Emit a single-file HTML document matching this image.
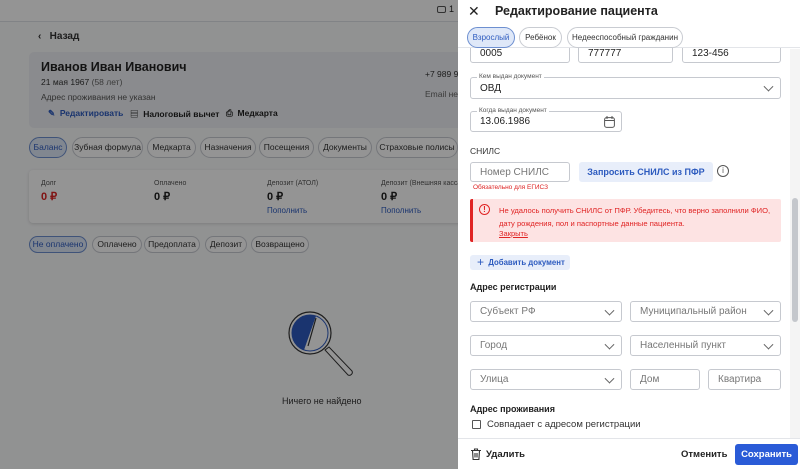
<!DOCTYPE html>
<html><head><meta charset="utf-8"><style>
*{box-sizing:border-box;margin:0;padding:0}
body{width:800px;height:469px;overflow:hidden;position:relative;font-family:"Liberation Sans","Noto Sans CJK SC",sans-serif;background:#fafbfc;color:#222;font-size:10px}
.abs{position:absolute;white-space:nowrap}
.pill{position:absolute;border:1px solid #c9ccd2;border-radius:12px;background:#fff;font-size:8.5px;color:#333;text-align:center;white-space:nowrap}
.ov{position:absolute;left:0;top:0;width:800px;height:469px;background:rgba(0,0,0,0.42)}
.panel{position:absolute;left:458px;top:0;width:342px;height:469px;background:#fff}
.inp{position:absolute;border:1px solid #c6c9cf;border-radius:3px;background:#fff;font-size:10px;color:#222;padding-left:9px;display:flex;align-items:center;white-space:nowrap}
.ph{color:#777}
.chev{position:absolute;right:8px;top:50%;width:7px;height:7px;border-right:1.3px solid #666;border-bottom:1.3px solid #666;transform:translateY(-70%) rotate(45deg)}
.lbl{position:absolute;top:-5px;left:6px;background:#fff;padding:0 2px;font-size:6.5px;color:#555}
</style></head><body>
<div class="abs" style="left:0;top:0;width:800px;height:22px;background:#fff;border-bottom:1px solid #dfe2e7"></div>
<div class="abs" style="left:437px;top:6px;width:9px;height:7px;border:1.2px solid #555;border-radius:2px"></div>
<div class="abs" style="left:449px;top:4px;font-size:9px">1</div>
<div class="abs" style="left:38px;top:31px;font-size:10px;font-weight:bold;color:#333">‹&nbsp;&nbsp;&nbsp;Назад</div>
<div class="abs" style="left:29px;top:52px;width:440px;height:76px;background:#eef0f4;border-radius:5px"></div>
<div class="abs" style="left:41px;top:60px;font-size:12.5px;font-weight:bold">Иванов Иван Иванович</div>
<div class="abs" style="left:41px;top:77px;font-size:8.5px;color:#333">21 мая 1967 <span style="color:#666">(58 лет)</span></div>
<div class="abs" style="left:41px;top:92px;font-size:8.5px;color:#555">Адрес проживания не указан</div>
<div class="abs" style="left:425px;top:69px;font-size:8.5px;color:#333">+7 989 9</div>
<div class="abs" style="left:425px;top:89px;font-size:8.5px;color:#666">Email не</div>
<div class="abs" style="left:48px;top:108px;font-size:8.5px;font-weight:bold;color:#2d5bbf">✎&nbsp; Редактировать</div>
<div class="abs" style="left:130px;top:108px;font-size:8.5px;font-weight:bold;color:#222">▤&nbsp; Налоговый вычет</div>
<div class="abs" style="left:226px;top:108px;font-size:8.5px;font-weight:bold;color:#222">⎙&nbsp; Медкарта</div>
<div class="pill" style="left:29px;top:137px;width:38px;height:21px;line-height:19px;background:#dfe8f8;border-color:#6d8fd0;color:#2d5bbf">Баланс</div>
<div class="pill" style="left:72px;top:137px;width:71px;height:21px;line-height:19px">Зубная формула</div>
<div class="pill" style="left:147px;top:137px;width:49px;height:21px;line-height:19px">Медкарта</div>
<div class="pill" style="left:200px;top:137px;width:56px;height:21px;line-height:19px">Назначения</div>
<div class="pill" style="left:259px;top:137px;width:55px;height:21px;line-height:19px">Посещения</div>
<div class="pill" style="left:318px;top:137px;width:54px;height:21px;line-height:19px">Документы</div>
<div class="pill" style="left:376px;top:137px;width:82px;height:21px;line-height:19px">Страховые полисы</div>
<div class="abs" style="left:29px;top:170px;width:440px;height:53px;background:#fff;border-radius:4px;box-shadow:0 1px 3px rgba(0,0,0,.15)"></div>
<div class="abs" style="left:41px;top:180px;font-size:7px;color:#555">Долг</div>
<div class="abs" style="left:41px;top:190px;font-size:11px;font-weight:bold;color:#d22">0 ₽</div>
<div class="abs" style="left:154px;top:180px;font-size:7px;color:#555">Оплачено</div>
<div class="abs" style="left:154px;top:190px;font-size:11px;font-weight:bold">0 ₽</div>
<div class="abs" style="left:267px;top:180px;font-size:7px;color:#555">Депозит (АТОЛ)</div>
<div class="abs" style="left:267px;top:190px;font-size:11px;font-weight:bold">0 ₽</div>
<div class="abs" style="left:267px;top:206px;font-size:8px;color:#2d5bbf">Пополнить</div>
<div class="abs" style="left:381px;top:180px;font-size:7px;color:#555">Депозит (Внешняя касса)</div>
<div class="abs" style="left:381px;top:190px;font-size:11px;font-weight:bold">0 ₽</div>
<div class="abs" style="left:381px;top:206px;font-size:8px;color:#2d5bbf">Пополнить</div>
<div class="pill" style="left:29px;top:236px;width:58px;height:17px;line-height:15px;background:#dfe8f8;border-color:#6d8fd0;color:#2d5bbf">Не оплачено</div>
<div class="pill" style="left:92px;top:236px;width:50px;height:17px;line-height:15px">Оплачено</div>
<div class="pill" style="left:144px;top:236px;width:56px;height:17px;line-height:15px">Предоплата</div>
<div class="pill" style="left:205px;top:236px;width:42px;height:17px;line-height:15px">Депозит</div>
<div class="pill" style="left:251px;top:236px;width:58px;height:17px;line-height:15px">Возвращено</div>
<svg class="abs" style="left:285px;top:308px" width="70" height="70" viewBox="0 0 70 70">
<circle cx="25" cy="25" r="21" fill="#fff" stroke="#333" stroke-width="1.2"/>
<path d="M25 7 A18 18 0 0 0 19 42 L31 8 Z" fill="#2d5bbf"/>
<circle cx="25" cy="25" r="18" fill="none" stroke="#2d5bbf" stroke-width="1"/>
<path d="M31 10 L23 38" stroke="#333" stroke-width="1.2"/>
<path d="M40 42 l4 -3 l23 24 a3 3 0 0 1 -4 4 z" fill="#fff" stroke="#333" stroke-width="1"/>
</svg>
<div class="abs" style="left:282px;top:396px;font-size:9px;color:#333">Ничего не найдено</div>
<div class="ov"></div>
<div class="panel">
 <div class="inp abs" style="left:12px;top:28px;width:100px;height:35px;align-items:flex-end;padding-bottom:3px">0005</div>
 <div class="inp abs" style="left:120px;top:28px;width:95px;height:35px;align-items:flex-end;padding-bottom:3px">777777</div>
 <div class="inp abs" style="left:224px;top:28px;width:99px;height:35px;align-items:flex-end;padding-bottom:3px">123-456</div>
 <div class="abs" style="left:0;top:0;width:342px;height:48px;background:#fff;border-bottom:1px solid #e3e5e9"></div>
 <div class="abs" style="left:10px;top:3px;font-size:14px;color:#222">✕</div>
 <div class="abs" style="left:37px;top:4px;font-size:12.5px;font-weight:bold">Редактирование пациента</div>
 <div class="pill" style="left:9px;top:27px;width:48px;height:21px;line-height:19px;background:#dfe8f8;border-color:#6d8fd0;color:#2d5bbf;font-size:8px">Взрослый</div>
 <div class="pill" style="left:61px;top:27px;width:43px;height:21px;line-height:19px;font-size:8px">Ребёнок</div>
 <div class="pill" style="left:109px;top:27px;width:116px;height:21px;line-height:19px;font-size:8px">Недееспособный гражданин</div>
 <div class="inp" style="left:12px;top:77px;width:311px;height:22px"><span class="lbl">Кем выдан документ</span>ОВД<span class="chev"></span></div>
 <div class="inp" style="left:12px;top:111px;width:152px;height:21px"><span class="lbl">Когда выдан документ</span>13.06.1986
  <svg class="abs" style="right:6px;top:4px" width="11" height="12" viewBox="0 0 11 12"><rect x="0.6" y="1.6" width="9.8" height="9.8" rx="2" fill="none" stroke="#555"/><path d="M0.6 4.5H10.4M3 0v3M8 0v3" stroke="#555"/></svg></div>
 <div class="abs" style="left:12px;top:146px;font-size:8.5px;color:#333">СНИЛС</div>
 <div class="inp" style="left:12px;top:162px;width:100px;height:20px"><span class="ph">Номер СНИЛС</span></div>
 <div class="abs" style="left:121px;top:162px;width:134px;height:20px;background:#e8eefa;border-radius:3px;color:#2d5bbf;font-weight:bold;font-size:9px;text-align:center;line-height:20px">Запросить СНИЛС из ПФР</div>
 <div class="abs" style="left:259px;top:165px;width:12px;height:12px;border:1px solid #555;border-radius:50%;font-size:8px;text-align:center;line-height:10px;color:#555">i</div>
 <div class="abs" style="left:15px;top:184px;font-size:6.5px;color:#d22">Обязательно для ЕГИСЗ</div>
 <div class="abs" style="left:12px;top:199px;width:311px;height:43px;background:#fde3e3;border-left:3px solid #e02424;border-radius:2px"></div>
 <div class="abs" style="left:21px;top:204px;width:11px;height:11px;border:1.2px solid #e02424;border-radius:50%;color:#e02424;font-size:8px;font-weight:bold;text-align:center;line-height:9px">!</div>
 <div class="abs" style="left:41px;top:204px;font-size:7.6px;color:#e02424;line-height:13px">Не удалось получить СНИЛС от ПФР. Убедитесь, что верно заполнили ФИО,<br>дату рождения, пол и паспортные данные пациента.</div>
 <div class="abs" style="left:41px;top:229px;font-size:7.5px;color:#e02424;text-decoration:underline">Закрыть</div>
 <div class="abs" style="left:12px;top:255px;width:100px;height:15px;background:#e8eefa;border-radius:3px;color:#2d5bbf;font-weight:bold;font-size:7.8px;line-height:15px;padding-left:7px"><span style="font-size:12px;font-weight:normal;vertical-align:-1px">+</span>&nbsp; Добавить документ</div>
 <div class="abs" style="left:12px;top:282px;font-size:9px;font-weight:bold">Адрес регистрации</div>
 <div class="inp" style="left:12px;top:301px;width:152px;height:21px"><span class="ph">Субъект РФ</span><span class="chev"></span></div>
 <div class="inp" style="left:172px;top:301px;width:151px;height:21px"><span class="ph">Муниципальный район</span><span class="chev"></span></div>
 <div class="inp" style="left:12px;top:335px;width:152px;height:21px"><span class="ph">Город</span><span class="chev"></span></div>
 <div class="inp" style="left:172px;top:335px;width:151px;height:21px"><span class="ph">Населенный пункт</span><span class="chev"></span></div>
 <div class="inp" style="left:12px;top:369px;width:152px;height:21px"><span class="ph">Улица</span><span class="chev"></span></div>
 <div class="inp" style="left:172px;top:369px;width:70px;height:21px"><span class="ph">Дом</span></div>
 <div class="inp" style="left:250px;top:369px;width:73px;height:21px"><span class="ph">Квартира</span></div>
 <div class="abs" style="left:12px;top:404px;font-size:9px;font-weight:bold">Адрес проживания</div>
 <div class="abs" style="left:14px;top:420px;width:9px;height:9px;border:1px solid #555;border-radius:1px"></div>
 <div class="abs" style="left:29px;top:419px;font-size:9.5px;color:#333">Совпадает с адресом регистрации</div>
 <div class="abs" style="left:332px;top:49px;width:10px;height:389px;background:#f4f4f4"></div>
 <div class="abs" style="left:334px;top:198px;width:6px;height:124px;background:#c4c7cc;border-radius:3px"></div>
 <div class="abs" style="left:0;top:438px;width:342px;height:31px;background:#fff;border-top:1px solid #e3e5e9"></div>
 <svg class="abs" style="left:13px;top:448px" width="10" height="12" viewBox="0 0 10 12"><path d="M0 2.5H10M3.5 2.5V1h3v1.5M1.5 2.5l.6 9h5.8l.6-9M4 5v4.5M6 5v4.5" fill="none" stroke="#333" stroke-width="1.1"/></svg>
 <div class="abs" style="left:28px;top:449px;font-size:9.5px;font-weight:bold">Удалить</div>
 <div class="abs" style="left:223px;top:449px;font-size:9.5px;font-weight:bold">Отменить</div>
 <div class="abs" style="left:277px;top:444px;width:63px;height:21px;background:#2a5bd7;border-radius:3px;color:#fff;font-weight:bold;font-size:9.5px;text-align:center;line-height:21px">Сохранить</div>
</div>
</body></html>
